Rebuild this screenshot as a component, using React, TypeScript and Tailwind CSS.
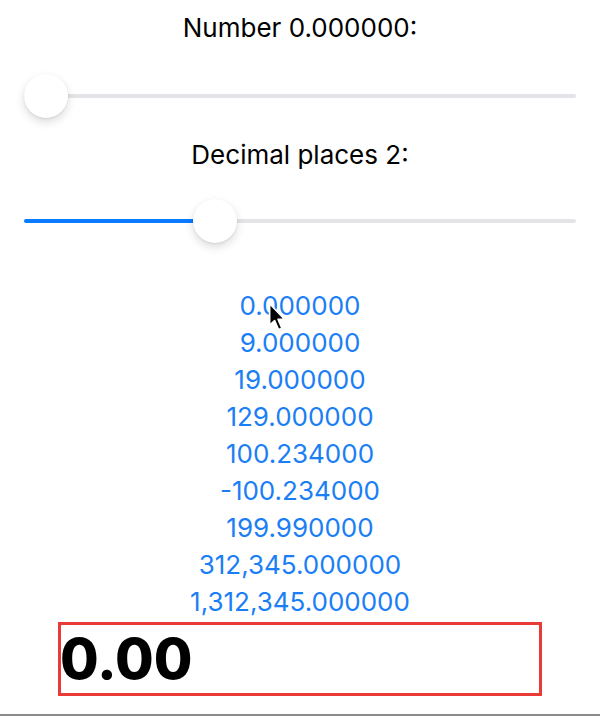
import React, { useState } from "react";

const numbers = [
  0, 9, 19, 129, 100.234, -100.234, 199.99, 312345, 1312345,
];

function fmt(n: number, digits: number) {
  return n.toLocaleString("en-US", {
    minimumFractionDigits: digits,
    maximumFractionDigits: digits,
  });
}

function Slider({ value, max }: { value: number; max: number }) {
  const pct = (value / max) * 100;
  return (
    <div className="relative h-[44px] w-full">
      <div className="absolute left-0 right-0 top-[20px] h-[4px] rounded-full bg-[#e3e3e8]" />
      <div
        className="absolute left-0 top-[20px] h-[4px] rounded-full bg-[#0a7aff]"
        style={{ width: `calc(22px + (100% - 44px) * ${pct / 100})` }}
      />
      <div
        className="absolute top-0 h-[44px] w-[44px] rounded-full bg-white shadow-[0_4px_10px_rgba(0,0,0,0.14),0_1px_2px_rgba(0,0,0,0.08)]"
        style={{ left: `calc((100% - 44px) * ${pct / 100})` }}
      />
    </div>
  );
}

export default function App() {
  const [number] = useState(0);
  const [places] = useState(2);

  return (
    <div
      className="relative flex h-[716px] w-full flex-col items-center border-b-2 border-[#8a8a8a] bg-white"
      style={{ fontFamily: "Inter, 'Noto Sans', sans-serif" }}
    >
      <div className="mt-[14px] text-[26px] leading-[28px] text-black">
        Number {number.toFixed(6)}:
      </div>

      <div className="mt-[32px] w-full px-[24px]">
        <Slider value={number} max={100} />
      </div>

      <div className="mt-[23px] text-[26px] leading-[28px] text-black">
        Decimal places {places}:
      </div>

      <div className="mt-[30px] w-full px-[24px]">
        <Slider value={places} max={6} />
      </div>

      <div className="mt-[44px] flex flex-col items-center">
        {numbers.map((n) => (
          <div
            key={n}
            className="text-[26px] leading-[37px] text-[#1a7ef5]"
          >
            {fmt(n, 6)}
          </div>
        ))}
      </div>

      <div className="mt-[2px] flex h-[74px] w-[484px] items-center border-[3px] border-[#ea3a35]">
        <span className="-ml-[1px] text-[56px] font-extrabold leading-none text-black">
          {fmt(number, places)}
        </span>
      </div>

      <svg
        className="absolute left-[268px] top-[302px]"
        width="22"
        height="31"
        viewBox="0 0 20 28"
      >
        <path
          d="M1.5 1.5 L1.5 21 L6 16.8 L9.6 25 L12.6 23.7 L9.1 15.6 L15 15.6 Z"
          fill="black"
          stroke="white"
          strokeWidth="1.5"
          strokeLinejoin="round"
        />
      </svg>
    </div>
  );
}
